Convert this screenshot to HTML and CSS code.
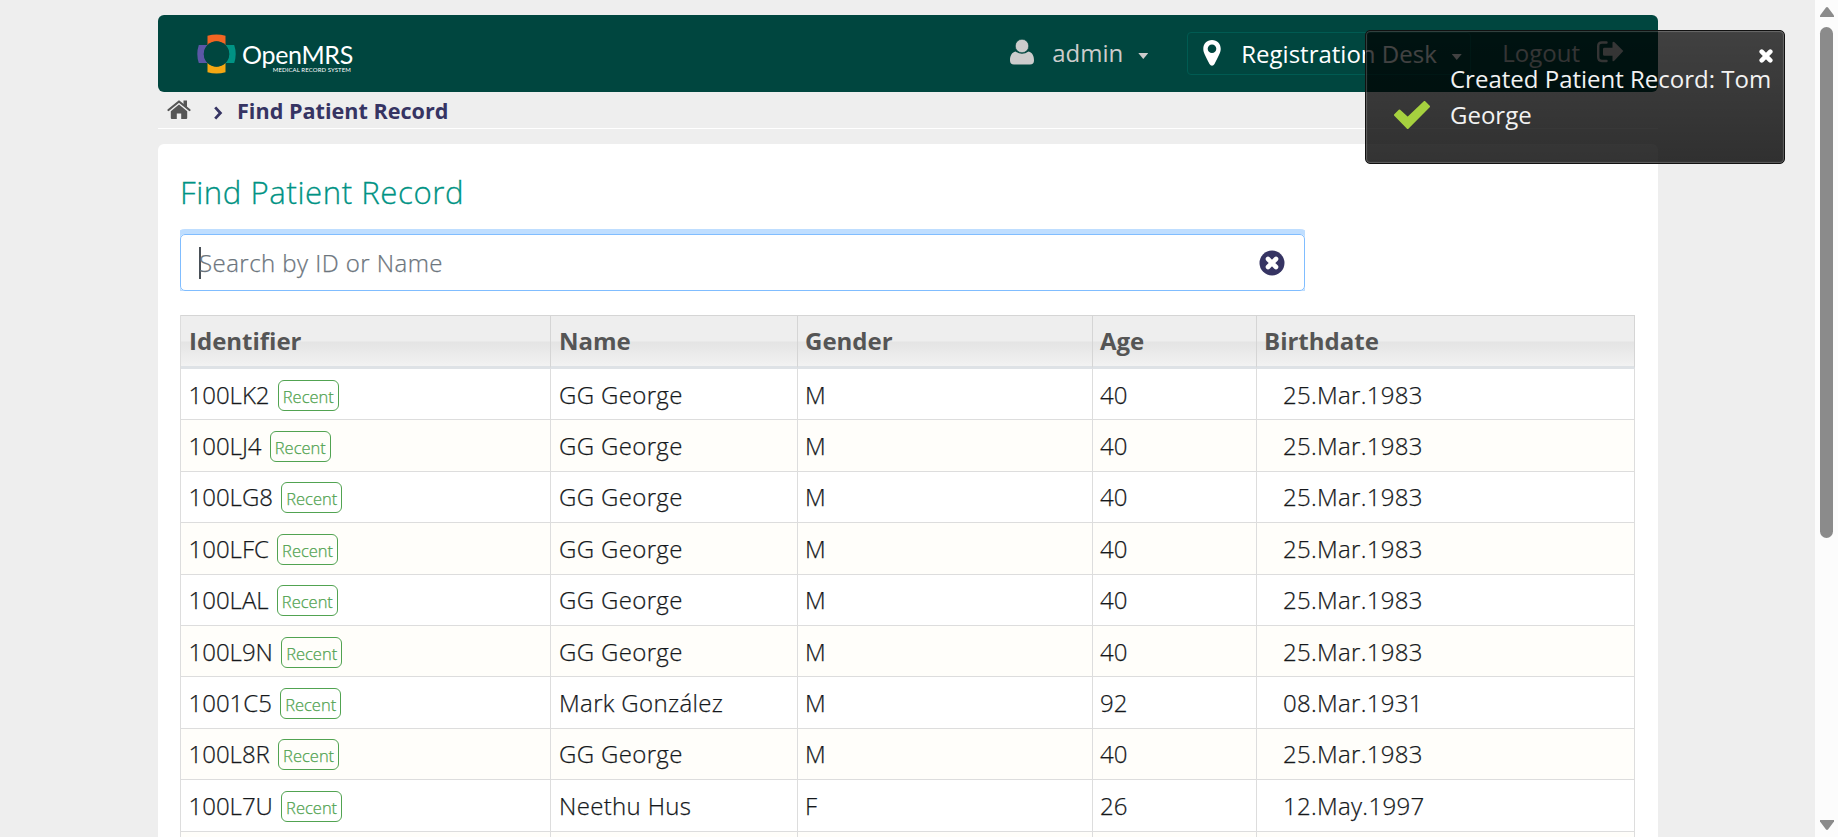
FILE: index.html
```
<!DOCTYPE html>
<html lang="en">
<head>
<meta charset="utf-8">
<title>Find Patient Record</title>
<link rel="stylesheet" href="styles.css">
</head>
<body>
<div class="page">
  <div class="container">
    <header class="topbar">
      <div class="logo">
        <svg class="logo-mark" viewBox="0 0 39 40" width="39" height="40">
          <path fill="#f26522" d="M10.500 1.800Q19.500-.7 28.500 1.800V11.500Q19.500 3.500 10.500 11.500Z"/>
          <path fill="#f5a713" d="M10.500 38.200Q19.500 40.700 28.500 38.200V28.500Q19.500 36.500 10.500 28.500Z"/>
          <path fill="#5b57a6" d="M1.800 11Q-1.200 20 1.800 29H10.800Q2.800 20 10.800 11Z"/>
          <path fill="#009384" d="M37.200 11Q40.200 20 37.200 29H28.200Q36.200 20 28.200 11Z"/>
          <circle cx="19.500" cy="20" r="12.700" fill="#00463f"/>
        </svg>
        <div class="logo-text"><span class="logo-name">OpenMRS</span><span class="logo-tag">MEDICAL RECORD SYSTEM</span></div>
      </div>
      <nav class="menu">
        <div class="user">
          <svg width="24" height="26" viewBox="0 0 24 26"><path fill="#ccc" d="M5.500 12.500Q12 17 18.500 12.500C22.500 13.500 24 17 24 21.500Q24 25.500 20 25.500H4Q0 25.500 0 21.500C0 17 1.500 13.500 5.500 12.500Z"/><circle cx="12" cy="7" r="6.700" fill="#ccc" stroke="#00463f" stroke-width=".6"/></svg>
          <span>admin</span>
          <i class="caret"></i>
        </div>
        <div class="location">
          <svg width="18" height="26" viewBox="0 0 18 26"><path fill="#fff" fill-rule="evenodd" d="M9 0C14.200 0 17.700 3.800 17.700 8.700C17.700 12 16.500 14 11.500 24Q10.500 25.700 9 25.700T6.500 24C1.500 14 .3 12 .3 8.700C.3 3.800 3.800 0 9 0ZM9 4.500A4.300 4.300 0 1 0 9 13.100A4.300 4.300 0 1 0 9 4.500Z"/></svg>
          <span>Registration Desk</span>
          <i class="caret"></i>
        </div>
        <div class="logout">
          <span>Logout</span>
          <svg width="27" height="22" viewBox="0 0 27 22"><path fill="none" stroke="#ccc" stroke-width="2.400" stroke-linecap="round" d="M9.500 1.500H5Q1.200 1.500 1.200 5.200V16Q1.200 20 5 20H9.500"/><path fill="#ccc" d="M7.500 6.800H15.500V1.500Q16 0 17.500 1.200L26.300 10L17.500 19.600Q15.800 21 15.500 19.400V14.800H7.500Q6 14.800 6 13.400V8.200Q6 6.800 7.500 6.800Z"/></svg>
        </div>
      </nav>
    </header>
    <div class="breadcrumb">
      <svg class="home" width="24" height="20" viewBox="0 0 24 20"><path fill="none" stroke="#555" stroke-width="2.200" stroke-linecap="round" stroke-linejoin="round" d="M1.500 10L12 1.500L22.500 10"/><path fill="#555" d="M16.500.5H20V8L16.500 5.200Z"/><path fill="#555" d="M12 4.500L20.200 11.300V18Q20.200 19 19.200 19H14.200V13.500H9.800V19H4.800Q3.800 19 3.800 18V11.300Z"/></svg>
      <svg class="chev" width="9" height="14" viewBox="0 0 9 14"><path fill="none" stroke="#363463" stroke-width="2.800" d="M1.200 1.400L6.400 7L1.200 12.600"/></svg>
      <span>Find Patient Record</span>
    </div>
    <main class="content">
      <h2>Find Patient Record</h2>
      <div class="search-wrap">
        <div class="search">
          <span class="cursor"></span>
          <span class="placeholder">Search by ID or Name</span>
          <svg width="26" height="26" viewBox="0 0 26 26"><circle cx="13" cy="13" r="12.500" fill="#363463"/><path stroke="#fff" stroke-width="4.600" stroke-linecap="round" d="M9 9L17 17M17 9L9 17"/></svg>
        </div>
      </div>
      <table class="results">
        <colgroup><col class="c1"><col class="c2"><col class="c3"><col class="c4"><col class="c5"></colgroup>
        <thead><tr><th>Identifier</th><th>Name</th><th>Gender</th><th>Age</th><th>Birthdate</th></tr></thead>
        <tbody>
          <tr><td>100LK2 <b>Recent</b></td><td class="name">GG George</td><td>M</td><td>40</td><td class="date">25.Mar.1983</td></tr>
          <tr><td>100LJ4 <b>Recent</b></td><td class="name">GG George</td><td>M</td><td>40</td><td class="date">25.Mar.1983</td></tr>
          <tr><td>100LG8 <b>Recent</b></td><td class="name">GG George</td><td>M</td><td>40</td><td class="date">25.Mar.1983</td></tr>
          <tr><td>100LFC <b>Recent</b></td><td class="name">GG George</td><td>M</td><td>40</td><td class="date">25.Mar.1983</td></tr>
          <tr><td>100LAL <b>Recent</b></td><td class="name">GG George</td><td>M</td><td>40</td><td class="date">25.Mar.1983</td></tr>
          <tr><td>100L9N <b>Recent</b></td><td class="name">GG George</td><td>M</td><td>40</td><td class="date">25.Mar.1983</td></tr>
          <tr><td>1001C5 <b>Recent</b></td><td class="name">Mark González</td><td>M</td><td>92</td><td class="date">08.Mar.1931</td></tr>
          <tr><td>100L8R <b>Recent</b></td><td class="name">GG George</td><td>M</td><td>40</td><td class="date">25.Mar.1983</td></tr>
          <tr><td>100L7U <b>Recent</b></td><td class="name">Neethu Hus</td><td>F</td><td>26</td><td class="date">12.May.1997</td></tr>
          <tr><td></td><td></td><td></td><td></td><td></td></tr>
        </tbody>
      </table>
    </main>
  </div>
</div>
<div class="scrollbar">
  <svg width="14" height="10" viewBox="0 0 14 10"><path fill="#8b8b8b" d="M5.800.8Q7-.6 8.200.8L14 8.500V10H0V8.500Z"/></svg>
  <div class="thumb"></div>
  <svg width="14" height="10" viewBox="0 0 14 10"><path fill="#8b8b8b" d="M5.800 9.200Q7 10.600 8.200 9.200L14 1.500V0H0V1.500Z"/></svg>
</div>
<div class="toast">
  <svg class="check" width="36" height="28" viewBox="0 0 36 28"><path fill="#a6d13f" stroke="#a6d13f" stroke-width="2" stroke-linejoin="round" d="M1 14L5.500 9.500L13.700 17L30.500 1L35 5.500L13.700 27Z"/></svg>
  <p>Created Patient Record: Tom<br>George</p>
  <svg class="close" width="14" height="14" viewBox="0 0 14 14"><path stroke="#fff" stroke-width="4.600" stroke-linecap="round" d="M2.700 2.700L11.300 11.300M11.300 2.700L2.700 11.300"/></svg>
</div>
</body>
</html>
```
FILE: styles.css
```
* { box-sizing: border-box; }
html, body { height: 837px; overflow: hidden; }
body {
  margin: 0;
  display: flex;
  background: #eee;
  font-family: "Open Sans", "Noto Sans", sans-serif;
  font-size: 24px;
  font-weight: 300;
  color: #15181b;
}
svg { display: block; flex: none; }
.page { flex: 1; height: 837px; overflow: hidden; padding: 15px 0 0 158px; }
.container { width: 1500px; }
.topbar {
  display: flex;
  justify-content: space-between;
  height: 77px;
  padding: 17px 34px 0 39px;
  background: #00463f;
  border-radius: 6px;
}
.logo { display: flex; gap: 8px; padding-top: 2px; }
.logo-text { display: flex; flex-direction: column; align-items: flex-end; color: #fff; width: 109px; padding-top: 6px; }
.logo-name { font: 400 25px/28px Lato, sans-serif; letter-spacing: -.3px; white-space: nowrap; }
.logo-tag { font: 400 6px/8px Lato, sans-serif; letter-spacing: .1px; white-space: nowrap; padding-right: 2px; margin-top: -2px; }
.menu { display: flex; height: 43px; color: #ccc; font-weight: 400; line-height: 42px; }
.user { display: flex; gap: 18px; width: 177px; margin-right: 1px; }
.user svg { margin: 7px 0 0 1px; }
.caret { width: 10px; height: 6px; background: currentColor; clip-path: polygon(0 0, 100% 0, 50% 100%); margin-top: 21px; }
.user .caret { margin-left: -3px; }
.location { display: flex; width: 284px; padding-left: 15px; border: 1px solid #005b52; border-radius: 4px; color: #fff; line-height: 41px; }
.location svg { margin: 7px 20px 0 0; }
.location .caret { margin: 21px 0 0 15px; }
.logout { display: flex; gap: 17px; padding-left: 31px; line-height: 41px; }
.logout svg { margin-top: 9px; }
.breadcrumb {
  display: flex;
  height: 37px;
  border-bottom: 1px solid #fff;
  padding-left: 9px;
  font-size: 21.600px;
  font-weight: 700;
  line-height: 37px;
  color: #363463;
}
.home { margin-top: 8px; }
.chev { margin: 14px 14px 0 23px; }
.content { margin-top: 15px; height: 720px; padding: 27px 22px 0; background: #fff; border-radius: 6px; }
h2 { margin: 0; font-size: 31.200px; font-weight: 300; letter-spacing: .55px; line-height: 42px; color: #009384; -webkit-text-stroke: .3px; }
.search-wrap { width: 1125px; margin-top: 16px; padding-top: 5px; overflow: hidden; }
.search {
  display: flex;
  align-items: center;
  height: 57px;
  padding: 0 19px 0 18px;
  border: 1px solid #80bdff;
  border-radius: 5px;
  box-shadow: 0 0 0 5px #bfdeff;
  color: #6c757d;
}
.cursor { width: 2px; height: 32px; background: #495057; margin-right: -2px; }
.placeholder { flex: 1; letter-spacing: .45px; -webkit-text-stroke: .25px; }
.results { width: 1455px; margin-top: 24px; table-layout: fixed; border-collapse: separate; border-spacing: 0; border-left: 1px solid #ddd; }
.c1 { width: 370px; } .c2 { width: 247px; } .c3 { width: 295px; } .c4 { width: 164px; }
th {
  height: 54px;
  padding: 0 8px 2px;
  text-align: left;
  color: #555;
  font-weight: 700;
  line-height: 33px;
  border: 1px solid #d5d5d5;
  border-width: 1px 1px 3px 0;
  border-bottom-color: #dee2e6;
  background: linear-gradient(#eee 50%, #e4e4e4 52%, #f2f2f2);
}
th:nth-child(n+3) { padding-left: 7px; }
td { height: 51.400px; padding: 1px 8px 0 7px; line-height: 36px; border: 1px solid #ddd; border-width: 0 1px 1px 0; -webkit-text-stroke: .25px; }
td:first-child { padding-left: 7.500px; }
tbody tr:nth-child(even) { background: #fffefa; }
td.name { padding-left: 8px; letter-spacing: .35px; }
td.date { padding-left: 26px; letter-spacing: .3px; }
td b { display: inline-block; height: 31px; padding: 0 4px; border: 1px solid #51a351; border-radius: 6px; color: #51a351; font-size: 16.500px; font-weight: 300; line-height: 31px; margin-left: 2px; position: relative; top: -1px; }
.scrollbar { display: flex; flex-direction: column; align-items: center; width: 23px; height: 837px; padding: 7px 0; background: #fcfcfc; }
.thumb { width: 13px; height: 511px; margin: 10px 0 282px; border-radius: 7px; background: #8b8b8b; }
.toast {
  position: absolute;
  left: 1365px;
  top: 30px;
  width: 420px;
  height: 134px;
  padding: 30px 12px 0 28px;
  display: flex;
  gap: 20px;
  border: 1px solid #111;
  border-radius: 5px;
  box-shadow: inset 0 0 1px 1px rgba(255, 255, 255, .22);
  background: linear-gradient(rgba(0, 0, 0, .73), rgba(0, 0, 0, .8));
  color: #f2f2f2;
  font-weight: 400;
}
.toast p { margin: 0; line-height: 36px; white-space: nowrap; }
.check { margin-top: 40px; }
.close { position: absolute; right: 11px; top: 18px; }
```
